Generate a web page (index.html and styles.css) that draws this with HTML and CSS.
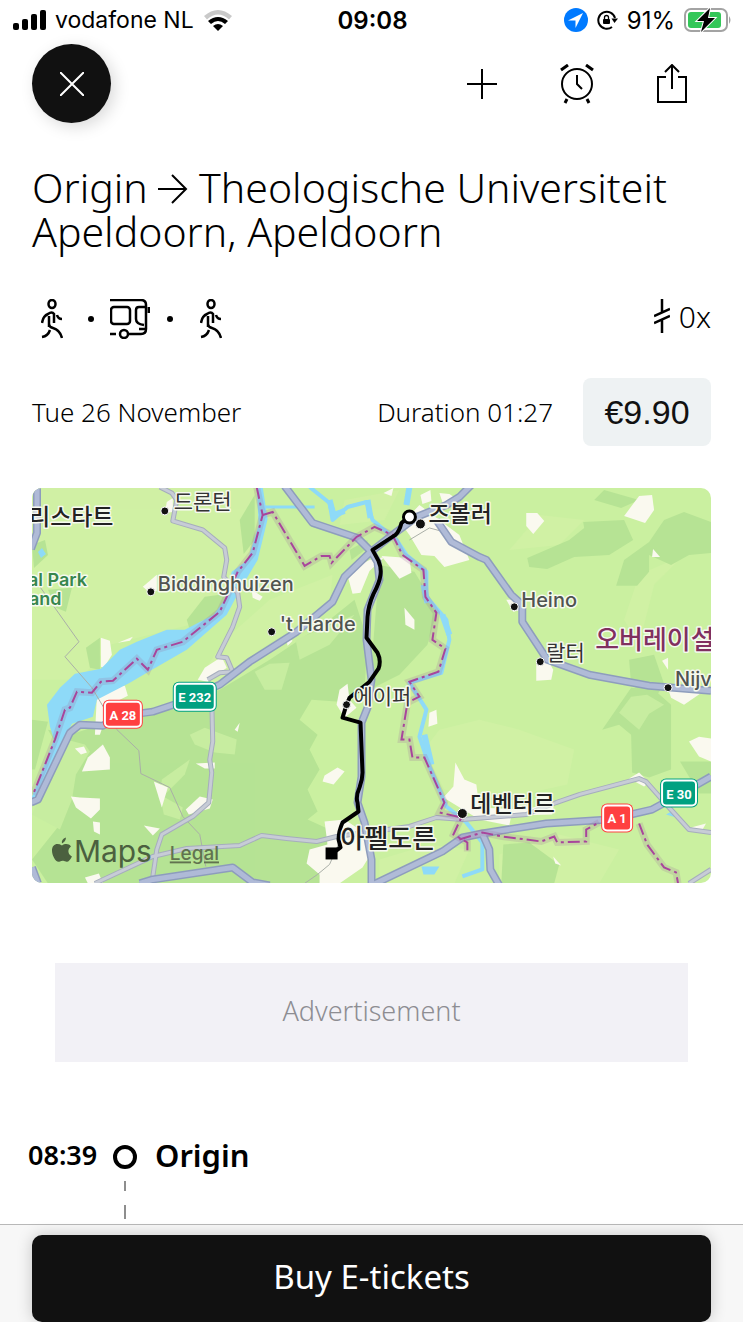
FILE: index.html
```
<!DOCTYPE html>
<html lang="en">
<head>
  <meta charset="UTF-8">
  <meta name="viewport" content="width=device-width, initial-scale=1.0">
  <title>Trip details</title>
  <link rel="stylesheet" href="styles.css">
</head>
<body>
  <div class="status-bar">
    <div class="status-left">
      <svg width="33" height="20" viewBox="0 0 33 20">
        <rect x="0" y="13" width="6" height="7" rx="2"/>
        <rect x="9" y="9" width="6" height="11" rx="2"/>
        <rect x="18" y="4" width="6" height="16" rx="2"/>
        <rect x="27" y="0" width="6" height="20" rx="2"/>
      </svg>
      <span class="carrier">vodafone NL</span>
      <svg width="30" height="22" viewBox="0 0 30 22">
        <path d="M1 7Q15 -5 29 7L26 10.500Q15 0.500 4 10.500Z" fill="#c9c9c9"/>
        <path d="M5 12Q15 4 25 12L22 15Q15 9 8 15Z"/>
        <path d="M10 17Q15 13 20 17L15 22Z"/>
      </svg>
    </div>
    <span class="clock">09:08</span>
    <div class="status-right">
      <svg width="24" height="24" viewBox="0 0 24 24">
        <circle cx="12" cy="12" r="12" fill="#007aff"/>
        <path d="M19 5L4 12.500L11.500 12.500L11.500 20Z" fill="#fff"/>
      </svg>
      <svg width="21" height="20" viewBox="0 0 21 20">
        <path d="M18 8A8.500 8.500 0 1 0 15 17" fill="none" stroke="#000" stroke-width="2"/>
        <path d="M14.500 8.500H21L17.500 13Z"/>
        <rect x="6" y="9" width="7" height="5" rx="1"/>
        <path d="M7.500 10V7.500a2 2 0 0 1 4 0V10" fill="none" stroke="#000" stroke-width="1.300"/>
      </svg>
      <span>91%</span>
      <svg width="48" height="24" viewBox="0 0 48 24">
        <rect x="1" y="1" width="42" height="22" rx="6" fill="#fff" stroke="#a3a3a3" stroke-width="2"/>
        <rect x="4" y="4" width="33" height="16" rx="3" fill="#34c759"/>
        <path d="M45 8q3 4 0 8z" fill="#a3a3a3"/>
        <path d="M26 0L13 13H20L17 24L31 10H24Z" stroke="#fff" stroke-width="2" paint-order="stroke"/>
      </svg>
    </div>
  </div>

  <header class="toolbar">
    <button class="close" aria-label="Close">
      <svg width="24" height="24" viewBox="0 0 24 24"><path d="M0 0L24 24M24 0L0 24" stroke="#fff" stroke-width="2"/></svg>
    </button>
    <div class="actions">
      <button aria-label="Add">
        <svg width="30" height="30" viewBox="0 0 30 30"><path d="M15 0V30M0 15H30" stroke="#000" stroke-width="2"/></svg>
      </button>
      <button aria-label="Set alarm">
        <svg width="34" height="40" viewBox="0 0 34 40" fill="none" stroke="#000" stroke-width="2">
          <circle cx="17" cy="20" r="15"/>
          <path d="M17 11V20L22 25"/>
          <path d="M1 6L8 1M33 6L26 1M7 35L5 39M27 35L29 39" stroke-width="3"/>
        </svg>
      </button>
      <button aria-label="Share">
        <svg width="32" height="40" viewBox="0 0 32 40" fill="none" stroke="#000" stroke-width="2">
          <path d="M10 13H2V38H30V13H22M16 25V2M9 8L16 1L23 8"/>
        </svg>
      </button>
    </div>
  </header>

  <main>
    <section class="trip">
      <h1>Origin <svg class="arrow" width="30" height="30" viewBox="0 0 30 30"><path d="M0 15H28M14 1L28 15L14 29" fill="none" stroke="#000" stroke-width="2"/></svg> Theologische Universiteit Apeldoorn, Apeldoorn</h1>

      <div class="legs">
        <div class="modes">
          <svg class="walk" width="22" height="40" viewBox="0 0 22 40">
            <ellipse cx="11" cy="5" rx="3.500" ry="4"/>
            <path d="M8 18V28M1 24Q2 17 7 15Q11 12 13 15V24M8 17V25Q8 28 12 29Q19 31 21 39M1 38Q7 37 9 31M16 16Q17 20 21 20"/>
          </svg>
          <span class="dot"></span>
          <svg class="bus" width="40" height="40" viewBox="0 0 40 40">
            <path d="M0 1H31Q36 1 36 6V30Q36 35 31 35H19M0 35H6M36 8H29Q26 8 26 11V20Q26 25 34 26M29 30H36"/>
            <rect x="1" y="8" width="19" height="17" rx="3"/>
            <circle cx="14" cy="35" r="4"/>
            <path d="M39 8V14" stroke-width="3"/>
          </svg>
          <span class="dot"></span>
          <svg class="walk" width="22" height="40" viewBox="0 0 22 40">
            <ellipse cx="11" cy="5" rx="3.500" ry="4"/>
            <path d="M8 18V28M1 24Q2 17 7 15Q11 12 13 15V24M8 17V25Q8 28 12 29Q19 31 21 39M1 38Q7 37 9 31M16 16Q17 20 21 20"/>
          </svg>
        </div>
        <div class="transfers">
          <svg width="16" height="34" viewBox="0 0 16 34"><path d="M8 0V14M0 17L16 10M0 24L16 17M8 21V34" fill="none" stroke="#000" stroke-width="2.500"/></svg>
          <span>0x</span>
        </div>
      </div>

      <div class="summary">
        <span>Tue 26 November</span>
        <span class="duration">Duration 01:27</span>
        <button class="price">€9.90</button>
      </div>

      <svg class="map" viewBox="32 488 680 396" role="img" aria-label="Route map">
        <rect x="32" y="488" width="680" height="396" fill="#caf0a0"/>
        <!-- fields -->
        <g fill="#d0f1a4">
          <path d="M32 488H255L250 555L230 600L190 625L110 645L80 680H32Z"/>
          <path d="M270 600L333 575L330 605L260 650L220 684L200 678L225 640Z"/>
          <path d="M345 500L400 490L385 520L340 525Z"/>
          <path d="M480 720L520 730L575 750L568 785L500 800L445 790L425 750L440 730Z"/>
          <path d="M510 550L540 515L585 520L560 545Z"/>
          <path d="M640 575L685 555L655 585L640 645L625 620Z"/>
          <path d="M500 855L560 835L620 850L600 884H500Z"/>
          <path d="M380 860L430 845L470 850L455 884H380Z"/>
        </g>
        <!-- forests -->
        <g fill="#b6e394">
          <path d="M48 730L70 735L110 722L135 715L180 705L220 690L270 660L330 620L355 600L368 640L365 690L340 702L312 700L300 720L318 735L310 750L320 770L308 790L318 812L308 820L330 830L320 884H48L32 860L60 825L65 760Z"/>
          <path d="M380 565L415 572L438 610L428 645L400 675L370 690Z"/>
          <path d="M32 720L48 722L35 770H32Z"/>
          <path d="M528 558L570 540L585 528L584 522L625 520L634 540L610 555L575 557L548 569L530 567Z"/>
          <path d="M650 542L665 520L685 512L712 522V553L690 555L672 565L650 555L650 572L638 586L617 586L625 560Z"/>
          <path d="M595 500L605 490L640 500L622 508Z"/>
          <path d="M630 660L655 655L665 684L655 700L632 685Z"/>
          <path d="M603 730L632 688L655 690L672 705V770L650 778L633 773L632 735L620 725Z"/>
          <path d="M504 845L530 843L560 865L555 884H502Z"/>
          <path d="M187 620L205 597L235 593L225 612L190 630Z"/>
          <path d="M86 648L100 638V670L90 668Z"/>
          <path d="M32 545L45 540L48 555L34 568Z"/>
          <path d="M240 520L255 495V540L244 554Z"/>
          <path d="M350 550L368 540V548L352 560Z"/>
          <path d="M681 762H712V794H700Z"/>
          <path d="M48 590L72 588L66 612L56 608Z"/>
        </g>
        <g fill="#c7eda0">
          <path d="M190 735L205 728L237 740L235 755L215 753L195 745Z"/>
          <path d="M162 780L190 760L185 775L160 800Z"/>
          <path d="M160 795L183 808L180 820L164 815Z"/>
          <path d="M296 640L355 615L330 645L300 660Z"/>
          <path d="M255 672L270 664L290 663L282 690L265 690Z"/>
          <path d="M620 713L632 697L648 695L665 705L650 714L640 730Z"/>
          <path d="M32 815L60 755L66 740L85 745L90 752L76 775L72 800L60 830Z"/>
        </g>
        <!-- built-up areas -->
        <g fill="#faf9ef">
          <path d="M167 502L173 498V512L165 513Z"/>
          <path d="M143 587L157 575V591L150 593Z"/>
          <path d="M101 638L110 641L112 655L104 668L101 667Z"/>
          <path d="M118 643L133 637L130 641Z"/>
          <path d="M198 680L205 668L222 657L227 668L208 682Z"/>
          <path d="M105 687L125 686L128 696L110 705L100 735H95L97 696Z"/>
          <path d="M82 772L88 758L103 745L110 758V770Z"/>
          <path d="M71 797L80 798L100 799V810L91 819L76 808Z"/>
          <path d="M93 822L100 823V835L94 832Z"/>
          <path d="M154 782L168 788L162 808Z"/>
          <path d="M186 810L200 797L213 800L210 809L189 815Z"/>
          <path d="M144 826L160 829L153 836Z"/>
          <path d="M196 764L215 763L215 769L205 769Z"/>
          <path d="M235 730L240 723L238 732Z"/>
          <path d="M75 749L84 747L87 753L81 755Z"/>
          <path d="M347 572L370 560L385 557L370 571L361 593L353 594Z"/>
          <path d="M382 556L410 558L412 573L400 579Z"/>
          <path d="M402 524L420 505L440 520L460 535L470 560L445 567L435 556L422 555L410 535Z"/>
          <path d="M384 493L394 488L392 496Z"/>
          <path d="M421 495L431 490L432 501L423 504Z"/>
          <path d="M440 493L450 494L459 500L445 508Z"/>
          <path d="M405 608L415 620V630L406 625Z"/>
          <path d="M340 690L348 684L350 700L357 708L345 718L337 705Z"/>
          <path d="M325 776L338 768L345 772L334 785L323 782Z"/>
          <path d="M430 713L437 710L438 724L429 727Z"/>
          <path d="M325 822L345 820L360 830L380 845L371 855L363 868L340 884H320V875L307 864L310 850L328 845Z"/>
          <path d="M444 798L454 787L456 763L465 780L477 785L480 808L525 810L555 803L553 815L512 816L510 826L480 820Z"/>
          <path d="M527 513L538 513L545 521L534 534L527 526Z"/>
          <path d="M625 516L640 496L653 495L655 510L646 523Z"/>
          <path d="M654 549L661 557H653Z"/>
          <path d="M507 600L516 600L522 610L514 612Z"/>
          <path d="M537 660L548 659L554 670L552 680L537 681Z"/>
          <path d="M663 661L669 658V670Z"/>
          <path d="M669 689L704 692L685 705L672 698Z"/>
          <path d="M690 742L700 737L712 739V762L700 757Z"/>
          <path d="M630 779L640 773L650 783L645 787Z"/>
          <path d="M692 828L707 824L703 831Z"/>
          <path d="M554 857L562 866L556 864Z"/>
          <path d="M85 878L99 874L103 884H88Z"/>
          <path d="M252 590L263 597L260 601L253 598Z"/>
          <path d="M286 637L293 641L288 646Z"/>
        </g>
        <!-- water -->
        <path d="M257 487L259 525L248 560L232 572L225 600L214 615L185 630H167L137 642L120 650L101 669L75 674L60 688L47 705L50 727L54 740L32 797V804L60 747L72 724L93 717L97 700L130 683L147 673L187 650L227 615L242 587L258 560L268 519L263 487Z" fill="#8edaf8"/>
        <g fill="none" stroke="#8edaf8" stroke-linejoin="round">
          <path d="M264 507H315" stroke-width="3"/>
          <path d="M310 487L330 503L333 520L348 507L367 502L373 520L397 540L407 555L427 572V597L447 620L450 640L442 673L410 683L427 710L420 737L430 767L447 807L467 823L483 843V870L463 877" stroke-width="4"/>
          <path d="M330 500L334 515L345 511M368 500L371 518M410 487L407 505M424 585L428 603M425 735L432 765M443 615L450 635" stroke-width="6"/>
        </g>
        <path d="M38 552L42 548L46 554L41 558ZM422 867H440L435 875H424ZM667 815L674 811L677 818Z" fill="#8edaf8"/>
        <!-- thin roads -->
        <g fill="none" stroke="#aaafa8" stroke-width="1">
          <path d="M40 587L79 642L65 657L92 688L117 730L139 751L141 774L170 788L183 817L200 835L206 867"/>
          <path d="M341 840L330 865L318 875L305 884M410 540L430 528L445 532"/>
        </g>
        <!-- secondary roads -->
        <g fill="none" stroke="#a6adbd" stroke-width="5" stroke-linejoin="round">
          <path d="M160 487L172 493L177 500L173 521L203 530L225 548L227 560L224 577L238 593L240 607L233 627L218 657L227 658L233 672L220 673L208 680"/>
          <path d="M212 700L213 742L210 760L212 773L209 803L193 817L162 835L157 850L153 877"/>
          <path d="M95 884L153 857L187 849L240 846L262 836L287 839L317 842L337 837L410 827L437 818L463 820L527 815L557 803L580 795L640 779L647 782L670 808L690 830L712 833M690 884L712 870"/>
        </g>
        <g fill="none" stroke="#c7ccd6" stroke-width="3" stroke-linejoin="round">
          <path d="M160 487L172 493L177 500L173 521L203 530L225 548L227 560L224 577L238 593L240 607L233 627L218 657L227 658L233 672L220 673L208 680"/>
          <path d="M212 700L213 742L210 760L212 773L209 803L193 817L162 835L157 850L153 877"/>
          <path d="M95 884L153 857L187 849L240 846L262 836L287 839L317 842L337 837L410 827L437 818L463 820L527 815L557 803L580 795L640 779L647 782L670 808L690 830L712 833M690 884L712 870"/>
        </g>
        <!-- motorways -->
        <g fill="none" stroke="#8e9dbd" stroke-width="8" stroke-linejoin="round">
          <path d="M37 487V533L31 549M31 803L38 800L70 733L80 725L103 726L123 716L153 712L177 704L220 685L250 662L297 632L333 602L345 577L370 553L393 535L417 517L447 505L460 497L472 485"/>
          <path d="M285 486L313 523L358 538L372 552L378 562L380 580L368 610L367 640L372 680L368 708L362 723V777L358 803L365 823L372 860V886L443 852L463 838L483 834L547 824L610 820L653 810L677 797L712 777"/>
          <path d="M437 520L452 542L480 557L487 560L512 595L523 605V622L548 660L590 675L650 686L712 691"/>
          <path d="M140 884L153 880L233 868L253 883L270 886M483 834L490 850L491 870L500 886M32 868L38 884"/>
        </g>
        <g fill="none" stroke="#b0bbd7" stroke-width="5" stroke-linejoin="round">
          <path d="M37 487V533L31 549M31 803L38 800L70 733L80 725L103 726L123 716L153 712L177 704L220 685L250 662L297 632L333 602L345 577L370 553L393 535L417 517L447 505L460 497L472 485"/>
          <path d="M285 486L313 523L358 538L372 552L378 562L380 580L368 610L367 640L372 680L368 708L362 723V777L358 803L365 823L372 860V886L443 852L463 838L483 834L547 824L610 820L653 810L677 797L712 777"/>
          <path d="M437 520L452 542L480 557L487 560L512 595L523 605V622L548 660L590 675L650 686L712 691"/>
          <path d="M140 884L153 880L233 868L253 883L270 886M483 834L490 850L491 870L500 886M32 868L38 884"/>
        </g>
        <!-- province borders -->
        <g class="border-glow">
          <path d="M257 487L263 515L253 553L238 572L227 597L220 612L183 642L157 650L148 670L137 659L113 681L101 682L92 693L77 692L70 708L65 710L55 740L33 795"/>
          <path d="M263 515L273 512L305 566L322 556H330L332 563L357 537L375 527L393 535L403 555L424 570L426 597L437 613L433 640L446 649L439 672L410 682L420 697L408 703L402 740H410L413 758H425L445 803L440 813L462 818L454 835L468 843V852M460 840L483 833L503 837L542 842L555 837L558 843L587 842V830L600 823M640 824L648 845L665 868L677 873L679 884"/>
        </g>
        <g class="border-line">
          <path d="M257 487L263 515L253 553L238 572L227 597L220 612L183 642L157 650L148 670L137 659L113 681L101 682L92 693L77 692L70 708L65 710L55 740L33 795"/>
          <path d="M263 515L273 512L305 566L322 556H330L332 563L357 537L375 527L393 535L403 555L424 570L426 597L437 613L433 640L446 649L439 672L410 682L420 697L408 703L402 740H410L413 758H425L445 803L440 813L462 818L454 835L468 843V852M460 840L483 833L503 837L542 842L555 837L558 843L587 842V830L600 823M640 824L648 845L665 868L677 873L679 884"/>
        </g>
        <!-- route -->
        <path class="route" d="M408 518L402 523Q400 531 396 535L373 550L379 561Q382 568 381 575Q380 583 374 594Q369 605 368 617L367 638L378 653Q382 661 379 669L370 682L350 698L347 705L343 718L361 723L363 773Q363 780 360 788Q356 797 358 803L359 812L343 823Q339 832 339 840L341 848L333 854"/>
        <circle cx="410" cy="517" r="6" fill="#fff" stroke="#000" stroke-width="3"/>
        <rect x="326" y="848" width="12" height="12"/>
        <!-- places -->
        <g class="place-dots">
          <circle cx="165" cy="511" r="4"/>
          <circle cx="151" cy="592" r="4"/>
          <circle cx="272" cy="632" r="4"/>
          <circle cx="421" cy="524" r="5"/>
          <circle cx="515" cy="607" r="4"/>
          <circle cx="541" cy="662" r="4"/>
          <circle cx="347" cy="705" r="4"/>
          <circle cx="669" cy="688" r="4"/>
          <circle cx="463" cy="814" r="5"/>
        </g>
        <g class="labels">
          <text x="29" y="525" class="city">리스타트</text>
          <text x="174" y="509" class="korean">드론턴</text>
          <text x="158" y="591">Biddinghuizen</text>
          <text x="280" y="631">'t Harde</text>
          <text x="429" y="522" class="city">즈볼러</text>
          <text x="522" y="607">Heino</text>
          <text x="547" y="660" class="korean">랄터</text>
          <text x="676" y="686">Nijv</text>
          <text x="354" y="704" class="korean">에이퍼</text>
          <text x="471" y="812" class="city">데벤터르</text>
          <text x="341" y="849" class="city large">아펠도른</text>
          <text x="596" y="649" class="province">오버레이설</text>
          <text x="28" y="586" class="park">al Park</text>
          <text x="29" y="605" class="park">and</text>
        </g>
        <g class="shields">
          <rect x="173" y="682" width="44" height="30" rx="6" fill="#00a181"/>
          <rect x="175" y="684" width="40" height="26" rx="4"/>
          <text x="195" y="702">E 232</text>
          <rect x="103" y="700" width="40" height="29" rx="6" fill="#ff4040"/>
          <rect x="105" y="702" width="36" height="25" rx="4"/>
          <text x="123" y="720">A 28</text>
          <rect x="661" y="779" width="38" height="29" rx="6" fill="#00a181"/>
          <rect x="663" y="781" width="34" height="25" rx="4"/>
          <text x="680" y="799">E 30</text>
          <rect x="602" y="804" width="32" height="29" rx="6" fill="#ff4040"/>
          <rect x="604" y="806" width="28" height="25" rx="4"/>
          <text x="618" y="824">A 1</text>
        </g>
        <!-- map credit -->
        <path class="credit" d="M66 838Q66 842 62 844Q61 840 66 838M62 846C65 844 69 844 71 847C67 850 68 855 72 857C70 861 68 863 66 862C63 861 62 861 60 862C56 864 52 856 52 851C52 845 57 843 62 846Z"/>
        <text x="74" y="863" class="credit maps">Maps</text>
        <a href="#legal"><text x="170" y="861" class="credit legal">Legal</text></a>
      </svg>
    </section>

    <aside class="ad">Advertisement</aside>

    <section class="stop">
      <time>08:39</time>
      <div class="track">
        <span class="ring"></span>
        <svg width="4" height="40" viewBox="0 0 4 40"><path d="M2 1V11M2 25V39" stroke="#8e8e8e" stroke-width="2"/></svg>
      </div>
      <h2>Origin</h2>
    </section>
  </main>

  <footer class="buy-bar">
    <button class="buy">Buy E-tickets</button>
  </footer>
</body>
</html>
```
FILE: styles.css
```
* {
  box-sizing: border-box;
}

body {
  font-family: "Noto Sans", "Noto Sans CJK KR", sans-serif;
  margin: 0;
  min-height: 100vh;
  display: flex;
  flex-direction: column;
  background-color: #fff;
  color: #000;
}

button {
  border: none;
  padding: 0;
  background: none;
  color: inherit;
  font-family: inherit;
  cursor: pointer;
}

svg {
  flex-shrink: 0;
}

/* Status bar */
.status-bar {
  display: grid;
  grid-template-columns: 1fr auto 1fr;
  align-items: center;
  height: 40px;
  padding: 0 11px 0 13px;
  font-family: Inter, sans-serif;
  font-size: 24px;
}

.status-left,
.status-right {
  display: flex;
  align-items: center;
  gap: 9px;
}

.carrier {
  font-size: 23px;
}

.status-right {
  justify-content: flex-end;
}

.clock {
  font-weight: 600;
}

/* Toolbar */
.toolbar {
  display: flex;
  justify-content: space-between;
  align-items: center;
  padding: 4px 47px 4px 32px;
}

.close {
  display: flex;
  justify-content: center;
  align-items: center;
  width: 79px;
  height: 79px;
  border-radius: 50%;
  background-color: #111;
  box-shadow: 4px 4px 16px rgba(0, 0, 0, 0.15);
}

.actions {
  display: flex;
  gap: 47px;
}

.actions button {
  display: flex;
  justify-content: center;
  align-items: center;
  width: 48px;
  height: 48px;
}

/* Trip */
.trip {
  padding: 38px 32px 0;
}

h1 {
  margin: 0;
  font-size: 41px;
  font-weight: 350;
  line-height: 44px;
}

.arrow {
  vertical-align: -1px;
}

.legs {
  display: flex;
  justify-content: space-between;
  align-items: center;
  height: 40px;
  margin-top: 46px;
}

.modes {
  display: flex;
  align-items: center;
  padding-left: 9px;
}

.modes svg {
  fill: none;
  stroke: #000;
  stroke-width: 2.5;
}

.dot {
  width: 6px;
  height: 6px;
  border-radius: 50%;
  background-color: #000;
}

.walk + .dot {
  margin: 0 16px 0 25px;
}

.bus + .dot {
  margin: 0 27px 0 17px;
}

.transfers {
  display: flex;
  align-items: center;
  gap: 9px;
  padding-bottom: 6px;
  font-size: 30px;
  font-weight: 350;
}

.summary {
  display: flex;
  align-items: center;
  margin-top: 39px;
  font-size: 26px;
  font-weight: 350;
}

.duration {
  margin-left: auto;
}

.price {
  width: 128px;
  height: 68px;
  margin-left: 30px;
  border-radius: 8px;
  background-color: #eef2f3;
  color: #111;
  font-family: "Liberation Sans", sans-serif;
  font-size: 34px;
}

/* Map */
.map {
  display: block;
  width: 100%;
  margin-top: 42px;
  border-radius: 10px;
}

.border-glow {
  fill: none;
  stroke: #9c6a9c;
  stroke-width: 7;
  opacity: 0.2;
}

.border-line {
  fill: none;
  stroke: #a8459b;
  stroke-width: 2;
  stroke-dasharray: 12 4 3 4;
}

.route {
  fill: none;
  stroke: #000;
  stroke-width: 4;
  stroke-linejoin: round;
}

.place-dots {
  fill: #111;
  stroke: #fff;
  stroke-width: 1;
}

.labels {
  font-family: Inter, "Noto Sans CJK KR", sans-serif;
  font-size: 20px;
  font-weight: 500;
  fill: #505450;
  stroke: #f6f9ef;
  stroke-width: 3;
  stroke-linejoin: round;
  paint-order: stroke;
}

.labels .korean {
  font-size: 21px;
  font-weight: 400;
  fill: #333;
}

.labels .city {
  font-size: 23px;
  fill: #222;
}

.labels .large {
  font-size: 26px;
}

.labels .province {
  font-size: 26px;
  fill: #80305f;
}

.labels .park {
  font-size: 18px;
  font-weight: 600;
  fill: #37864d;
}

.shields {
  font-family: Roboto, sans-serif;
  font-size: 13px;
  font-weight: bold;
  text-anchor: middle;
}

.shields rect + rect {
  fill: none;
  stroke: #fff;
  stroke-width: 2;
}

.shields text {
  fill: #fff;
}

.credit {
  fill: #4b603f;
  font-family: Inter, sans-serif;
}

.maps {
  font-size: 30px;
}

.legal {
  font-size: 19px;
  font-weight: 500;
  fill: #61734f;
  text-decoration: underline;
}

/* Advertisement */
.ad {
  display: flex;
  justify-content: center;
  align-items: center;
  height: 99px;
  margin: 80px 55px 0;
  padding-bottom: 4px;
  background-color: #f2f1f6;
  color: #8d8d92;
  font-size: 27px;
  font-weight: 350;
}

/* Stops */
.stop {
  display: flex;
  align-items: flex-start;
  margin-top: 78px;
  padding-left: 28px;
  line-height: 30px;
}

.stop time {
  width: 70px;
  font-size: 27px;
  font-weight: 600;
}

.track {
  display: flex;
  flex-direction: column;
  align-items: center;
  gap: 11px;
  width: 24px;
  margin: 5px 18px 0 15px;
}

.ring {
  width: 24px;
  height: 24px;
  border: 4px solid #000;
  border-radius: 50%;
}

.stop h2 {
  margin: 0;
  font-size: 31px;
  font-weight: 600;
}

/* Bottom bar */
.buy-bar {
  position: fixed;
  bottom: 0;
  left: 0;
  right: 0;
  padding: 10px 32px 0;
  border-top: 1px solid #b8b8b8;
  background-color: #f7f7f7;
}

.buy {
  display: block;
  width: 100%;
  height: 87px;
  padding-bottom: 4px;
  border-radius: 10px;
  background-color: #111;
  box-shadow: 0 0 16px rgba(0, 0, 0, 0.2);
  color: #fff;
  font-size: 33px;
}
```
